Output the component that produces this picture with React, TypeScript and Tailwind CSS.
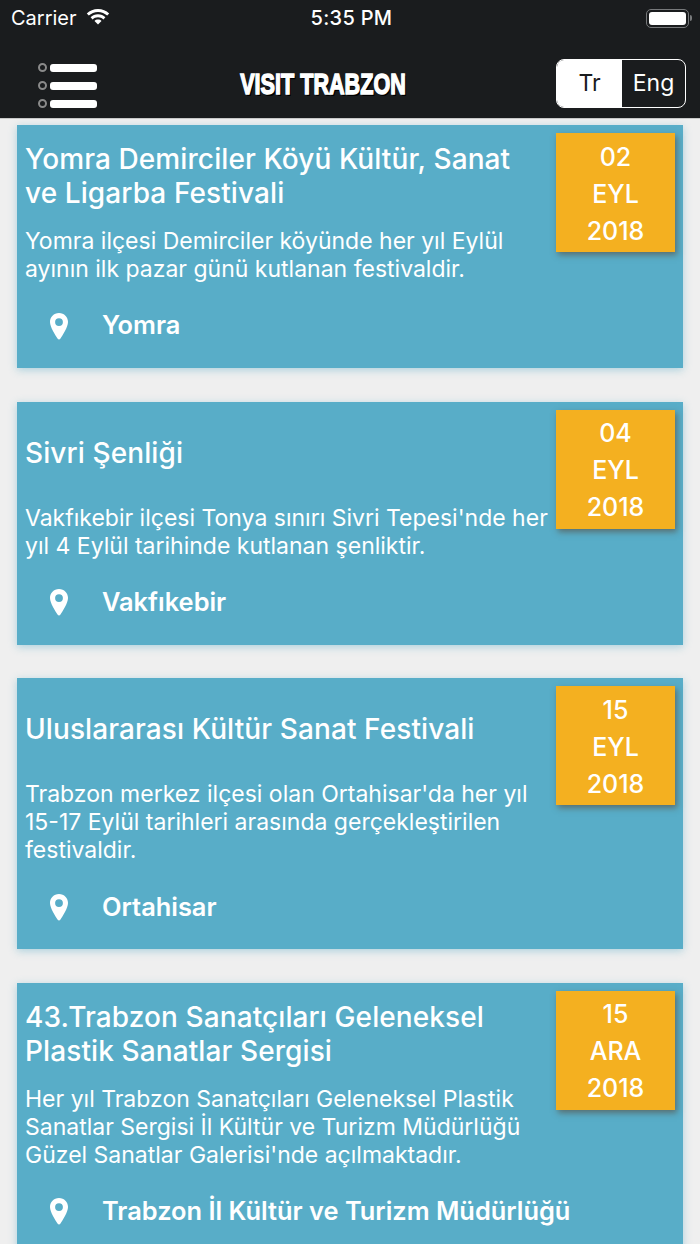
const EVENTS = [
  {
    title: 'Yomra Demirciler Köyü Kültür, Sanat ve Ligarba Festivali',
    desc: 'Yomra ilçesi Demirciler köyünde her yıl Eylül ayının ilk pazar günü kutlanan festivaldir.',
    place: 'Yomra',
    day: '02',
    month: 'EYL',
  },
  {
    title: 'Sivri Şenliği',
    desc: "Vakfıkebir ilçesi Tonya sınırı Sivri Tepesi'nde her yıl 4 Eylül tarihinde kutlanan şenliktir.",
    place: 'Vakfıkebir',
    day: '04',
    month: 'EYL',
  },
  {
    title: 'Uluslararası Kültür Sanat Festivali',
    desc: "Trabzon merkez ilçesi olan Ortahisar'da her yıl 15-17 Eylül tarihleri arasında gerçekleştirilen festivaldir.",
    place: 'Ortahisar',
    day: '15',
    month: 'EYL',
  },
  {
    title: '43.Trabzon Sanatçıları Geleneksel Plastik Sanatlar Sergisi',
    desc: "Her yıl Trabzon Sanatçıları Geleneksel Plastik Sanatlar Sergisi İl Kültür ve Turizm Müdürlüğü Güzel Sanatlar Galerisi'nde açılmaktadır.",
    place: 'Trabzon İl Kültür ve Turizm Müdürlüğü',
    day: '15',
    month: 'ARA',
  },
]

function StatusBar() {
  return (
    <div className="relative flex h-[36px] items-center justify-between pl-[11px] pr-[8px] text-[20px] text-white">
      <div className="flex items-center gap-[9px]">
        <span>Carrier</span>
        <svg className="-mt-[3px]" width="24" height="18" viewBox="0 0 24 18" fill="white">
          <path d="M12 1c4.400 0 8.300 1.700 11.200 4.500l-2 2.100C18.800 5.300 15.600 3.900 12 3.900S5.200 5.300 2.800 7.600l-2-2.100C3.700 2.700 7.600 1 12 1z" />
          <path d="M12 6.300c2.900 0 5.500 1.100 7.400 3l-2 2.100c-1.400-1.300-3.300-2.200-5.400-2.200s-4 .9-5.400 2.200l-2-2.100c1.900-1.900 4.500-3 7.400-3z" />
          <path d="M12 11.500c1.400 0 2.600.5 3.500 1.400L12 16.500l-3.500-3.600c.9-.9 2.100-1.400 3.500-1.400z" />
        </svg>
      </div>
      <span className="absolute left-[3px] right-0 text-center font-medium tracking-[0.3px]">5:35 PM</span>
      <div className="flex items-center gap-[1px]">
        <div className="h-[19px] w-[43px] rounded-[5px] border border-[#77797b] p-[2px]">
          <div className="h-full w-full rounded-[3px] bg-white" />
        </div>
        <div className="h-[6px] w-[2px] rounded-r-full bg-[#77797b]" />
      </div>
    </div>
  )
}

function MenuIcon() {
  return (
    <div className="mt-[5px] flex w-[60px] flex-col gap-[9px]">
      {[0, 1, 2].map(i => (
        <div key={i} className="flex items-center gap-[3px]">
          <span className="h-[9px] w-[9px] rounded-full border-2 border-[#8a8a8a]" />
          <span className="h-[8px] w-[47px] rounded-[3px] bg-white" />
        </div>
      ))}
    </div>
  )
}

function LangSwitch() {
  return (
    <div className="flex h-[49px] w-[130px] overflow-hidden rounded-[8px] border-[1.5px] border-white text-[23px]">
      <div className="flex w-[65px] items-center justify-center bg-white text-[#1a1c1e]">Tr</div>
      <div className="flex flex-1 items-center justify-center text-white">Eng</div>
    </div>
  )
}

function Header() {
  return (
    <div className="h-[119px] border-b border-[#c9c9c9] bg-[#1a1c1e]">
      <StatusBar />
      <div className="flex h-[82px] items-center justify-between pl-[38px] pr-[14px] pt-[12px]">
        <MenuIcon />
        <span className="mr-[8px] inline-block scale-x-[0.72] font-['Liberation_Sans',sans-serif] text-[30px] font-bold text-white [-webkit-text-stroke:1.5px_white] [text-shadow:2px_2px_0_#000]">
          VISIT TRABZON
        </span>
        <LangSwitch />
      </div>
    </div>
  )
}

function EventCard({ event }: { event: (typeof EVENTS)[number] }) {
  return (
    <div className="flex justify-between bg-[#58adc8] pl-[8px] pr-[8px] pt-[8px] text-white shadow-[0_2px_8px_rgba(88,173,200,0.45)]">
      <div className="w-[531px] pt-[9px]">
        <div className="flex h-[68px] w-[500px] items-center text-[28px] font-medium leading-[34px] tracking-[0.1px]">
          {event.title}
        </div>
        <p className="mt-[17px] text-[23px] leading-[28px]">{event.desc}</p>
        <div className="flex h-[85px] items-center pl-[24px]">
          <svg className="shrink-0" width="20" height="28" viewBox="0 0 20 28" fill="white">
            <path
              fillRule="evenodd"
              d="M10 1C4.800 1 1 5 1 10c0 5 5.500 13.500 7.700 16.700.6.900 2 .9 2.600 0C13.500 23.500 19 15 19 10c0-5-3.800-9-9-9zm0 5.200a3.900 3.900 0 110 7.800 3.900 3.900 0 010-7.800z"
            />
          </svg>
          <span className="ml-[33px] whitespace-nowrap text-[25.400px] font-semibold">{event.place}</span>
        </div>
      </div>
      <div className="flex h-[119px] w-[119px] shrink-0 flex-col items-center justify-center bg-[#f4b020] pt-[3px] text-[25px] font-medium leading-[37px] shadow-[2px_3px_6px_rgba(90,60,40,0.55)]">
        <span>{event.day}</span>
        <span>{event.month}</span>
        <span>2018</span>
      </div>
    </div>
  )
}

export default function App() {
  return (
    <div className="h-[1244px] w-[700px] overflow-hidden bg-[#efefef] font-['Inter',sans-serif]">
      <Header />
      <div className="flex flex-col gap-[33.600px] pl-[17px] pr-[17px] pt-[6px]">
        {EVENTS.map(event => (
          <EventCard key={event.title} event={event} />
        ))}
      </div>
    </div>
  )
}
